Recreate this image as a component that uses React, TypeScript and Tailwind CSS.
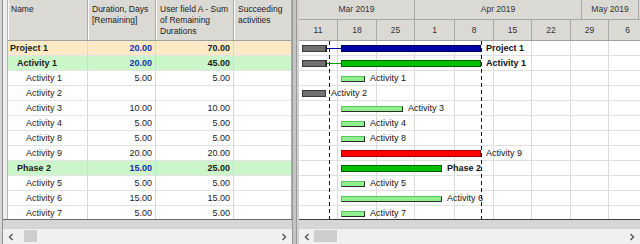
import React from "react";

type Row = {
  name: string;
  lvl: 0 | 1 | 2;
  dur: string;
  uf: string;
  kind?: "project" | "summary";
};

const rows: Row[] = [
  { name: "Project 1", lvl: 0, dur: "20.00", uf: "70.00", kind: "project" },
  { name: "Activity 1", lvl: 1, dur: "20.00", uf: "45.00", kind: "summary" },
  { name: "Activity 1", lvl: 2, dur: "5.00", uf: "5.00" },
  { name: "Activity 2", lvl: 2, dur: "", uf: "" },
  { name: "Activity 3", lvl: 2, dur: "10.00", uf: "10.00" },
  { name: "Activity 4", lvl: 2, dur: "5.00", uf: "5.00" },
  { name: "Activity 8", lvl: 2, dur: "5.00", uf: "5.00" },
  { name: "Activity 9", lvl: 2, dur: "20.00", uf: "20.00" },
  { name: "Phase 2", lvl: 1, dur: "15.00", uf: "25.00", kind: "summary" },
  { name: "Activity 5", lvl: 2, dur: "5.00", uf: "5.00" },
  { name: "Activity 6", lvl: 2, dur: "15.00", uf: "15.00" },
  { name: "Activity 7", lvl: 2, dur: "5.00", uf: "5.00" },
];

type Bar = {
  kind: "gray" | "light" | "green" | "blue" | "red";
  x: number;
  w: number;
};
type GRow = { bars: Bar[]; link?: "blue" | "green"; label: string; lx: number; bold?: boolean };

const gantt: GRow[] = [
  { bars: [{ kind: "gray", x: 3, w: 24 }, { kind: "blue", x: 42, w: 140 }], link: "blue", label: "Project 1", lx: 187, bold: true },
  { bars: [{ kind: "gray", x: 3, w: 24 }, { kind: "green", x: 42, w: 140 }], link: "green", label: "Activity 1", lx: 187, bold: true },
  { bars: [{ kind: "light", x: 42, w: 24 }], label: "Activity 1", lx: 71 },
  { bars: [{ kind: "gray", x: 3, w: 24 }], label: "Activity 2", lx: 32 },
  { bars: [{ kind: "light", x: 42, w: 62 }], label: "Activity 3", lx: 109 },
  { bars: [{ kind: "light", x: 42, w: 24 }], label: "Activity 4", lx: 71 },
  { bars: [{ kind: "light", x: 42, w: 24 }], label: "Activity 8", lx: 71 },
  { bars: [{ kind: "red", x: 42, w: 140 }], label: "Activity 9", lx: 187 },
  { bars: [{ kind: "green", x: 42, w: 101 }], label: "Phase 2", lx: 148, bold: true },
  { bars: [{ kind: "light", x: 42, w: 24 }], label: "Activity 5", lx: 71 },
  { bars: [{ kind: "light", x: 42, w: 101 }], label: "Activity 6", lx: 148 },
  { bars: [{ kind: "light", x: 42, w: 24 }], label: "Activity 7", lx: 71 },
];

const weeks = ["11", "18", "25", "1", "8", "15", "22", "29", "6"];
const weekW = [39, 39, 38, 40, 39, 38, 39, 38, 38];

const barCls: Record<Bar["kind"], string> = {
  gray: "top-[4px] h-[7px] bg-[#707070] border border-[#3a3a3a]",
  light: "top-[5px] h-[6px] bg-[#90f090] border-t border-l border-[#5cc45c] border-b border-r border-b-[#2a2a2a] border-r-[#2a2a2a]",
  green: "top-[4px] h-[7px] bg-[#00c000] border border-[#005a00]",
  blue: "top-[4px] h-[7px] bg-[#0000a8] border border-[#00005a]",
  red: "top-[4px] h-[7px] bg-[#ff0000] border border-[#a00000]",
};

function Chevron({ dir }: { dir: "l" | "r" }) {
  return (
    <svg width="6" height="8" viewBox="0 0 6 8">
      <path
        d={dir === "l" ? "M4.5 1 L1.5 4 L4.5 7" : "M1.5 1 L4.5 4 L1.5 7"}
        fill="none"
        stroke="#555"
        strokeWidth="1.4"
      />
    </svg>
  );
}

function Scrollbar({ thumbL, thumbW }: { thumbL: number; thumbW: number }) {
  return (
    <div className="h-[15px] bg-[#f0f0f0] flex items-center relative">
      <div className="w-[14px] flex justify-center pl-[2px]">
        <Chevron dir="l" />
      </div>
      <div className="flex-1 relative h-full">
        <div
          className="absolute top-[1px] h-[12px] bg-[#cdcdcd]"
          style={{ left: thumbL, width: thumbW }}
        />
      </div>
      <div className="w-[14px] flex justify-center pr-[2px]">
        <Chevron dir="r" />
      </div>
    </div>
  );
}

export default function App() {
  return (
    <div className="w-[640px] h-[244px] flex overflow-hidden bg-[#f0f0f0] text-black font-['Liberation_Sans',Arial,sans-serif]">
      {/* Left panel */}
      <div className="w-[292px] h-full flex shrink-0">
        <div className="w-[3px] h-full bg-[#d6d6d6] border-r border-[#8e8e8e]" />
        <div className="flex-1 flex flex-col min-w-0">
          <div className="flex h-[219px]">
            <div className="w-[5px] bg-[#ececec] border-r border-[#b4b4b4]" />
            <div className="w-[284px] flex flex-col bg-white border-r border-[#a8a8a8] overflow-hidden">
              {/* header */}
              <div className="h-[41px] flex bg-[#dbd9d4] border-b border-[#a0a0a0] text-[8.5px] leading-[11px] text-[#222] shrink-0">
                <div className="w-[80px] border-r border-[#a8a8a8] border-l border-l-white pl-[2px] pt-[4px]">Name</div>
                <div className="w-[68px] border-r border-[#a8a8a8] border-l border-l-white pl-[3px] pt-[4px]">
                  Duration, Days
                  <br />
                  [Remaining]
                </div>
                <div className="w-[78px] border-r border-[#a8a8a8] border-l border-l-white pl-[3px] pt-[4px]">
                  User field A - Sum
                  <br />
                  of Remaining
                  <br />
                  Durations
                </div>
                <div className="w-[57px] border-l border-l-white pl-[3px] pt-[4px]">
                  Succeeding
                  <br />
                  activities
                </div>
              </div>
              {/* body */}
              <div className="flex-1 overflow-hidden">
                {rows.map((r, i) => {
                  const bg =
                    r.kind === "project"
                      ? "bg-[#fce9c6]"
                      : r.kind === "summary"
                      ? "bg-[#caf6ca]"
                      : "bg-white";
                  const bold = r.kind ? "font-bold" : "";
                  const pl = r.lvl === 0 ? "pl-[2px]" : r.lvl === 1 ? "pl-[9px]" : "pl-[18px]";
                  return (
                    <div
                      key={i}
                      className={`h-[15px] flex text-[9px] leading-[14px] border-b border-[#e2e2e2] ${bg} ${bold}`}
                    >
                      <div className={`w-[80px] border-r border-[#d6d6d6] ${pl} whitespace-nowrap text-[#1a1a1a]`}>
                        {r.name}
                      </div>
                      <div
                        className={`w-[68px] border-r border-[#d6d6d6] pr-[3px] text-right ${
                          r.kind ? "text-[#1c2db0]" : "text-[#1a1a1a]"
                        }`}
                      >
                        {r.dur}
                      </div>
                      <div className="w-[78px] border-r border-[#d6d6d6] pr-[3px] text-right text-[#1a1a1a]">
                        {r.uf}
                      </div>
                      <div className="w-[57px]" />
                    </div>
                  );
                })}
              </div>
            </div>
          </div>
          <div className="h-[10px] bg-[#d6d6d6] border-t border-[#6a6a6a]" />
          <Scrollbar thumbL={7} thumbW={13} />
        </div>
      </div>

      {/* Splitter */}
      <div className="w-[5px] h-full bg-[#c4c4c4] border-x border-[#9a9a9a] shrink-0" />

      {/* Right panel */}
      <div className="flex-1 h-full flex flex-col border-l-2 border-[#d0d0d0] min-w-0">
        <div className="h-[219px] flex flex-col overflow-hidden bg-white">
          {/* header */}
          <div className="h-[41px] flex flex-col bg-[#dbd9d4] border-b border-[#a0a0a0] text-[8.5px] text-[#333] shrink-0">
            <div className="h-[20px] flex border-b border-[#a8a8a8]">
              <div className="w-[116px] shrink-0 border-r border-[#a8a8a8] flex items-center justify-center">Mar 2019</div>
              <div className="w-[167px] shrink-0 border-r border-[#a8a8a8] flex items-center justify-center">Apr 2019</div>
              <div className="w-[57px] shrink-0 border-r border-[#a8a8a8] flex items-center justify-center">May 2019</div>
            </div>
            <div className="flex-1 flex">
              {weeks.map((w, i) => (
                <div
                  key={i}
                  className="shrink-0 border-r border-[#a8a8a8] flex items-center justify-center"
                  style={{ width: weekW[i] }}
                >
                  {w}
                </div>
              ))}
            </div>
          </div>
          {/* body */}
          <div className="flex-1 relative overflow-hidden">
            {gantt.map((g, i) => (
              <div key={i} className="h-[15px] flex relative border-b border-[#e0e0e0]">
                {weekW.map((w, j) => (
                  <div key={j} className="shrink-0 h-full border-r border-[#dadada]" style={{ width: w }} />
                ))}
                {g.link && (
                  <>
                    <div
                      className={`absolute top-[7px] h-[1px] ${g.link === "blue" ? "bg-[#0000a8]" : "bg-[#00a000]"}`}
                      style={{ left: 27, width: 16 }}
                    />
                    <div className="absolute top-[4px] h-[7px] w-[2px] bg-[#222]" style={{ left: 26 }} />
                  </>
                )}
                {g.bars.map((b, k) => (
                  <div
                    key={k}
                    className={`absolute ${barCls[b.kind]}`}
                    style={{ left: b.x, width: b.w }}
                  />
                ))}
                <div
                  className={`absolute top-0 h-[15px] leading-[15px] text-[9px] whitespace-nowrap text-[#111] ${
                    g.bold ? "font-bold" : ""
                  }`}
                  style={{ left: g.lx }}
                >
                  {g.label}
                </div>
              </div>
            ))}
            <svg className="absolute left-0 top-0 pointer-events-none" width="341" height="180">
              <line x1="30.5" y1="0" x2="30.5" y2="180" stroke="#111" strokeWidth="1" strokeDasharray="4 3" />
              <line x1="182.5" y1="0" x2="182.5" y2="180" stroke="#111" strokeWidth="1" strokeDasharray="4 3" />
            </svg>
          </div>
        </div>
        <div className="h-[10px] bg-[#d6d6d6] border-t border-[#3a3a3a]" />
        <Scrollbar thumbL={1} thumbW={23} />
      </div>
    </div>
  );
}
